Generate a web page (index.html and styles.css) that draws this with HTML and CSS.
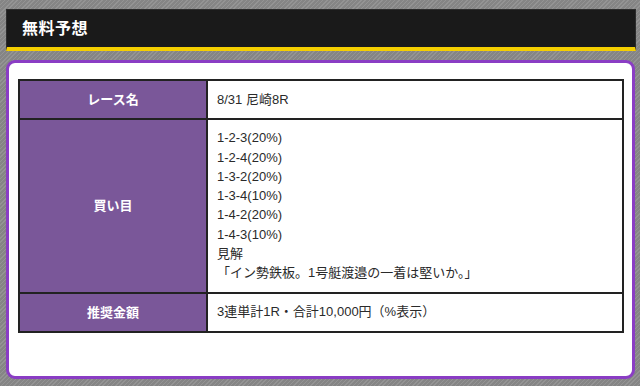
FILE: index.html
```html
<!DOCTYPE html>
<html lang="ja">
<head>
<meta charset="utf-8">
<link rel="stylesheet" href="styles.css">
</head>
<body>
<div class="page">
  <div class="header"><h2 class="title">無料予想</h2></div>
  <div class="card">
    <table class="info">
      <tr>
        <th class="label">レース名</th>
        <td class="value">8/31 尼崎8R</td>
      </tr>
      <tr>
        <th class="label">買い目</th>
        <td class="value">1-2-3(20%)<br>1-2-4(20%)<br>1-3-2(20%)<br>1-3-4(10%)<br>1-4-2(20%)<br>1-4-3(10%)<br>見解<br>「イン勢鉄板。1号艇渡邉の一着は堅いか。」</td>
      </tr>
      <tr>
        <th class="label">推奨金額</th>
        <td class="value">3連単計1R・合計10,000円（%表示）</td>
      </tr>
    </table>
  </div>
</div>
</body>
</html>
```
FILE: styles.css
```css
html, body {
  margin: 0;
  padding: 0;
}
body {
  width: 640px;
  height: 386px;
  overflow: hidden;
  font-family: "Liberation Sans", "Noto Sans CJK JP", sans-serif;
  background-color: #858585;
  background-image: repeating-linear-gradient(135deg, rgba(255,255,255,0.12) 0 1px, rgba(0,0,0,0) 1px 3px);
}
.page {
  padding: 9px 4px 0 6px;
}
.header {
  background: #1a1a1a;
  border: 1px solid #2c2c2c;
  border-bottom: 4px solid #f5cf00;
  height: 37px;
  display: flex;
  align-items: center;
  padding-left: 15px;
}
.title {
  margin: 0;
  color: #fff;
  font-size: 16px;
  font-weight: bold;
  line-height: 20px;
  letter-spacing: 0.5px;
}
.card {
  margin-top: 9px;
  background: #fff;
  border: 3px solid #8a3dc4;
  border-radius: 9px;
  padding: 16px 0 0 9px;
  box-sizing: content-box;
  width: 614px;
  height: 297px;
}
.info {
  border-collapse: collapse;
  width: 606px;
  border: 2px solid #222;
  font-size: 13px;
  line-height: 19.3px;
  color: #2a2a2a;
}
.info th, .info td {
  border: 2px solid #222;
}
.label {
  width: 166px;
  background: #7a5799;
  color: #fff;
  font-weight: bold;
  text-align: center;
  vertical-align: middle;
  padding: 9px 10px;
}
.value {
  text-align: left;
  padding: 8px 9px 9px 9px;
  background: #fff;
}
```
